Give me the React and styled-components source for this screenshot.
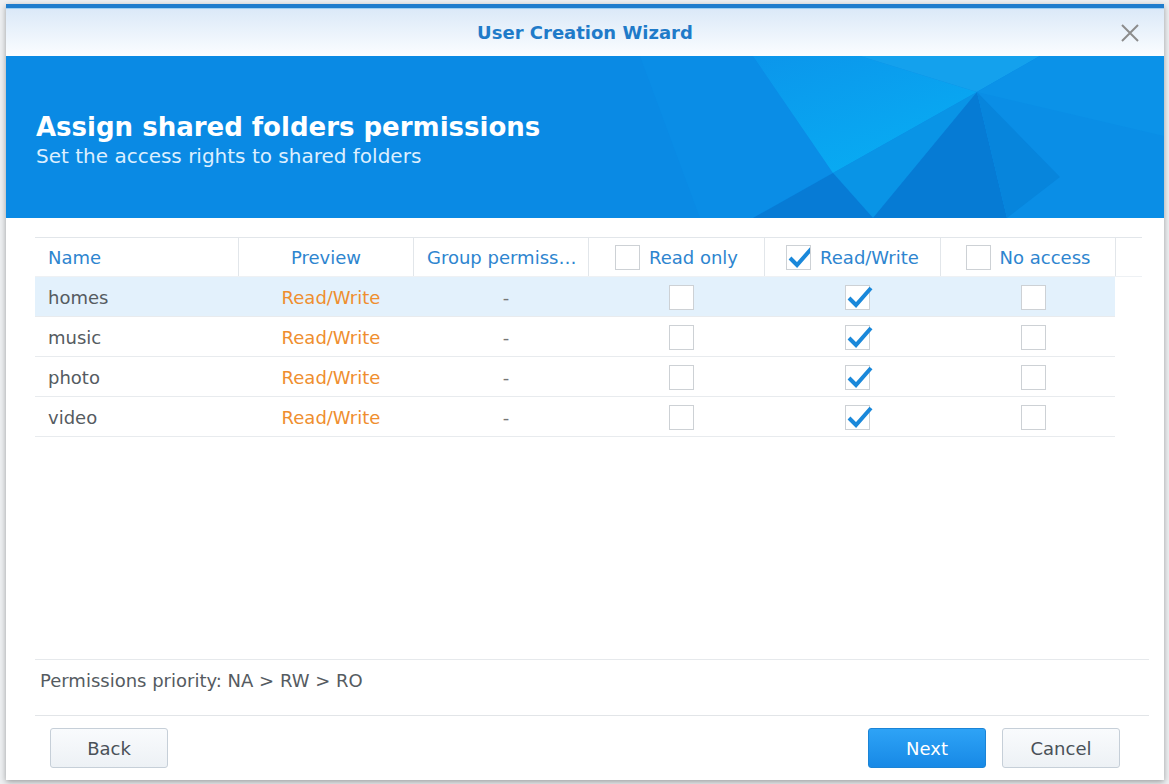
import React from 'react'
import styled, { createGlobalStyle } from 'styled-components'

const GlobalStyle = createGlobalStyle`
    html, body {
        margin: 0;
        padding: 0;
        background: #eef0f2;
        font-family: "DejaVu Sans", Verdana, sans-serif;
        overflow: hidden;
    }
`

const Page = styled.div`
    width: 1169px;
    height: 784px;
    padding: 4px 0 0 6px;
    box-sizing: border-box;
`

const Dialog = styled.div`
    width: 1158px;
    height: 776px;
    display: flex;
    flex-direction: column;
    background: #fff;
    border-top: 4px solid #1f7dcd;
    box-sizing: border-box;
    box-shadow: 0 2px 6px rgba(0,0,0,0.35);
`

const TitleBar = styled.div`
    height: 48px;
    flex: none;
    display: flex;
    align-items: center;
    justify-content: center;
    position: relative;
    background: linear-gradient(#dbe9f8, #fbfdff);
    border-top: 1px solid #9fd0f3;
    box-sizing: border-box;
`

const Title = styled.div`
    font-size: 18px;
    font-weight: bold;
    color: #1f7bc9;
`

const CloseButton = styled.div`
    position: absolute;
    right: 25px;
    top: 15px;
    width: 18px;
    height: 18px;
    cursor: pointer;
`

const Banner = styled.div`
    height: 162px;
    flex: none;
    position: relative;
    overflow: hidden;
    background: #0a8ae4;
    padding: 56px 30px 0 30px;
    box-sizing: border-box;
    .facets {
        position: absolute;
        left: 0;
        top: 0;
    }
`

const BannerTitle = styled.h1`
    position: relative;
    margin: 0;
    font-size: 26px;
    line-height: 30px;
    font-weight: bold;
    color: #fff;
`

const BannerSub = styled.div`
    position: relative;
    margin-top: 2px;
    font-size: 20px;
    line-height: 24px;
    color: #dcefff;
`

const Content = styled.div`
    flex: 1;
    display: flex;
    flex-direction: column;
    padding: 19px 22px 0 29px;
    min-height: 0;
`

const Grid = styled.div`
    flex: 1;
`

const HeaderRow = styled.div`
    display: grid;
    grid-template-columns: 203px 175px 175px 176px 176px 175px 21px;
    height: 40px;
    border-top: 1px solid #e2e6ea;
    border-bottom: 1px solid #eef1f4;
    box-sizing: border-box;
`

const HeadCell = styled.div`
    display: flex;
    align-items: center;
    justify-content: ${p => p.$left ? 'flex-start' : 'center'};
    gap: 9px;
    padding: ${p => p.$left ? '0 8px 0 13px' : '0'};
    border-left: ${p => p.$first ? 'none' : '1px solid #e2e6ea'};
    font-size: 18px;
    color: #2e85cf;
    white-space: nowrap;
    overflow: hidden;
    min-width: 0;
    span {
        overflow: hidden;
        text-overflow: ellipsis;
    }
`

const Row = styled.div`
    display: grid;
    grid-template-columns: 203px 175px 175px 176px 176px 175px;
    width: 1080px;
    height: 40px;
    background: ${p => p.$selected ? '#e3f1fc' : '#fff'};
    border-bottom: 1px solid #e8ebee;
    box-sizing: border-box;
`

const Cell = styled.div`
    display: flex;
    align-items: center;
    justify-content: ${p => p.$left ? 'flex-start' : 'center'};
    padding: 2px 0 0 ${p => p.$left ? '13px' : '11px'};
    font-size: 18px;
    color: ${p => p.$color || '#555b61'};
`

const Box = styled.span`
    position: relative;
    display: inline-block;
    width: 25px;
    height: 25px;
    flex: none;
    border: 1px solid #cdd1d5;
    background: #fff;
    box-sizing: border-box;
    svg {
        position: absolute;
        left: -1px;
        top: -3px;
    }
`

const PriorityBar = styled.div`
    height: 57px;
    flex: none;
    display: flex;
    align-items: center;
    padding: 0 0 14px 5px;
    box-sizing: border-box;
    border-top: 1px solid #e6e9ec;
    border-bottom: 1px solid #e2e5e8;
    margin-right: -7px;
    font-size: 18px;
    color: #555b61;
`

const ButtonBar = styled.div`
    flex: none;
    display: flex;
    align-items: center;
    gap: 16px;
    padding: 12px 22px 12px 15px;
`

const Button = styled.button`
    width: 118px;
    height: 40px;
    border-radius: 3px;
    font-family: "DejaVu Sans", Verdana, sans-serif;
    font-size: 18px;
    cursor: pointer;
    margin-left: ${p => p.$push ? 'auto' : '0'};
    color: ${p => p.$primary ? '#fff' : '#4a5158'};
    border: 1px solid ${p => p.$primary ? '#1b84d6' : '#c6cfd8'};
    background: ${p => p.$primary
        ? 'linear-gradient(#2ea3f6, #1789e6)'
        : 'linear-gradient(#f9fbfd, #edf1f5)'};
`

const Check = () => (
    <svg width="28" height="28" viewBox="0 0 28 28">
        <path d="M4 15 L11 22 L26 5" fill="none" stroke="#1a88da" strokeWidth="4" strokeLinejoin="miter" />
    </svg>
)

const CheckBox = ({ checked }) => (
    <Box>{checked && <Check />}</Box>
)

const Facets = () => (
    <svg className="facets" width="1158" height="162" viewBox="0 0 1158 162">
        <defs>
            <linearGradient id="cyan" x1="0" y1="0" x2="0.6" y2="1">
                <stop offset="0" stopColor="#0b96eb" />
                <stop offset="1" stopColor="#08acf3" />
            </linearGradient>
        </defs>
        <polygon points="634,0 747,0 827,117 747,162 694,162" fill="#0a8de6" />
        <polygon points="747,0 854,0 971,36 827,117" fill="url(#cyan)" />
        <polygon points="854,0 1034,0 971,36" fill="#14a1ed" />
        <polygon points="971,36 827,117 867,162" fill="#0994e6" />
        <polygon points="827,117 747,162 867,162" fill="#077bd5" />
        <polygon points="971,36 867,162 1001,162" fill="#067bd4" />
        <polygon points="971,36 1034,0 1158,0 1158,162 1001,162" fill="#0a8ee6" />
        <polygon points="971,36 1054,121 1001,162" fill="#0785dc" />
        <polygon points="971,36 1158,80 1158,0 1034,0" fill="#0b92e8" />
    </svg>
)

const folders = ['homes', 'music', 'photo', 'video']

export default function App() {
    return (
        <Page>
            <GlobalStyle />
            <Dialog>
                <TitleBar>
                    <Title>User Creation Wizard</Title>
                    <CloseButton>
                        <svg width="18" height="18" viewBox="0 0 18 18">
                            <path d="M1 1 L17 17 M17 1 L1 17" stroke="#8c8c8c" strokeWidth="2" />
                        </svg>
                    </CloseButton>
                </TitleBar>
                <Banner>
                    <Facets />
                    <BannerTitle>Assign shared folders permissions</BannerTitle>
                    <BannerSub>Set the access rights to shared folders</BannerSub>
                </Banner>
                <Content>
                    <Grid>
                        <HeaderRow>
                            <HeadCell $first $left>Name</HeadCell>
                            <HeadCell>Preview</HeadCell>
                            <HeadCell $left><span>Group permissions</span></HeadCell>
                            <HeadCell><CheckBox />Read only</HeadCell>
                            <HeadCell><CheckBox checked />Read/Write</HeadCell>
                            <HeadCell><CheckBox />No access</HeadCell>
                            <HeadCell />
                        </HeaderRow>
                        {folders.map((name, i) => (
                            <Row key={name} $selected={i === 0}>
                                <Cell $left>{name}</Cell>
                                <Cell $color="#ef8e2e">Read/Write</Cell>
                                <Cell $color="#777">-</Cell>
                                <Cell><CheckBox /></Cell>
                                <Cell><CheckBox checked /></Cell>
                                <Cell><CheckBox /></Cell>
                            </Row>
                        ))}
                    </Grid>
                    <PriorityBar>Permissions priority: NA &gt; RW &gt; RO</PriorityBar>
                    <ButtonBar>
                        <Button>Back</Button>
                        <Button $primary $push>Next</Button>
                        <Button>Cancel</Button>
                    </ButtonBar>
                </Content>
            </Dialog>
        </Page>
    )
}
